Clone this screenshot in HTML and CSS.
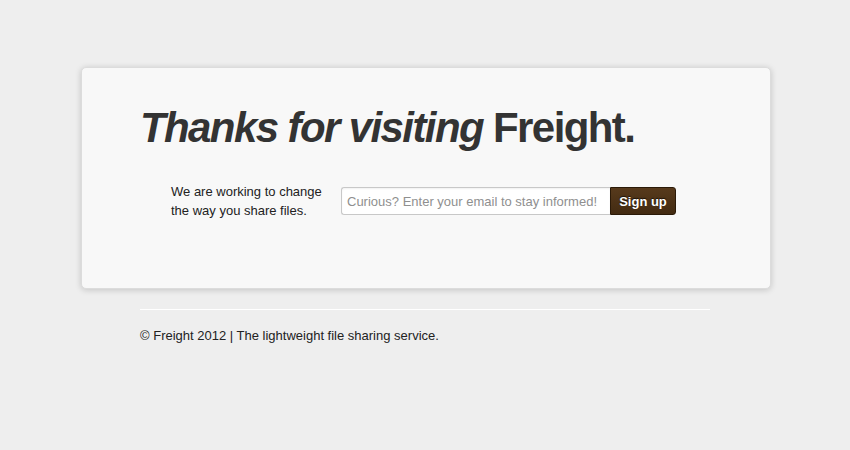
FILE: index.html
```html
<!DOCTYPE html>
<html>
<head>
<meta charset="utf-8">
<link rel="stylesheet" href="styles.css">
</head>
<body>
<div class="wrap">
  <div class="card">
    <h1 class="title"><em>Thanks for visiting</em> Freight.</h1>
    <div class="row">
      <p class="blurb">We are working to change<br>the way you share files.</p>
      <form class="signup">
        <input class="email" type="text" placeholder="Curious? Enter your email to stay informed!">
        <button class="btn" type="button">Sign up</button>
      </form>
    </div>
  </div>
  <div class="footer">
    <p class="copy">© Freight 2012 | The lightweight file sharing service.</p>
  </div>
</div>
</body>
</html>
```

FILE: styles.css
```css
html, body {
  margin: 0;
  padding: 0;
  background: #eeeeee;
  font-family: "Liberation Sans", Arial, sans-serif;
  color: #222;
}
.wrap {
  width: 690px;
  margin: 0 0 0 81px;
  padding-top: 67px;
}
.card {
  background: #f8f8f8;
  border: 1px solid #dcdcdc;
  border-radius: 5px;
  box-shadow: 0 1px 6px rgba(0,0,0,0.18);
  padding: 36px 58px 0;
  height: 222px;
  box-sizing: border-box;
}
.title {
  margin: 0;
  font-size: 42px;
  line-height: 48px;
  font-weight: bold;
  color: #333;
  letter-spacing: -1.6px;
}
.title em {
  font-style: italic;
}
.row {
  display: flex;
  align-items: center;
  margin-top: 30px;
  padding-left: 31px;
}
.blurb {
  margin: 0;
  width: 170px;
  font-size: 13px;
  line-height: 19px;
  color: #222;
}
.signup {
  display: flex;
  margin: 0;
}
.email {
  width: 269px;
  height: 28px;
  box-sizing: border-box;
  border: 1px solid #c8c8c8;
  border-right: none;
  border-radius: 3px 0 0 3px;
  background: #fff;
  box-shadow: inset 0 1px 2px rgba(0,0,0,0.06);
  padding: 0 5px;
  font-family: "Liberation Sans", Arial, sans-serif;
  font-size: 13px;
  color: #333;
  outline: none;
}
.email::placeholder {
  color: #8f8f8f;
}
.btn {
  width: 66px;
  height: 28px;
  box-sizing: border-box;
  border: 1px solid #2b1a08;
  border-radius: 0 3px 3px 0;
  background: linear-gradient(#573a1c, #432b12);
  color: #fff;
  font-family: "Liberation Sans", Arial, sans-serif;
  font-weight: bold;
  font-size: 13px;
  text-shadow: 0 -1px 1px rgba(0,0,0,0.7);
  padding: 0;
  cursor: pointer;
}
.footer {
  margin: 20px 61px 0 59px;
  border-top: 1px solid #fff;
  padding-top: 17px;
}
.copy {
  margin: 0;
  font-size: 13px;
  line-height: 18px;
  color: #222;
}
```
